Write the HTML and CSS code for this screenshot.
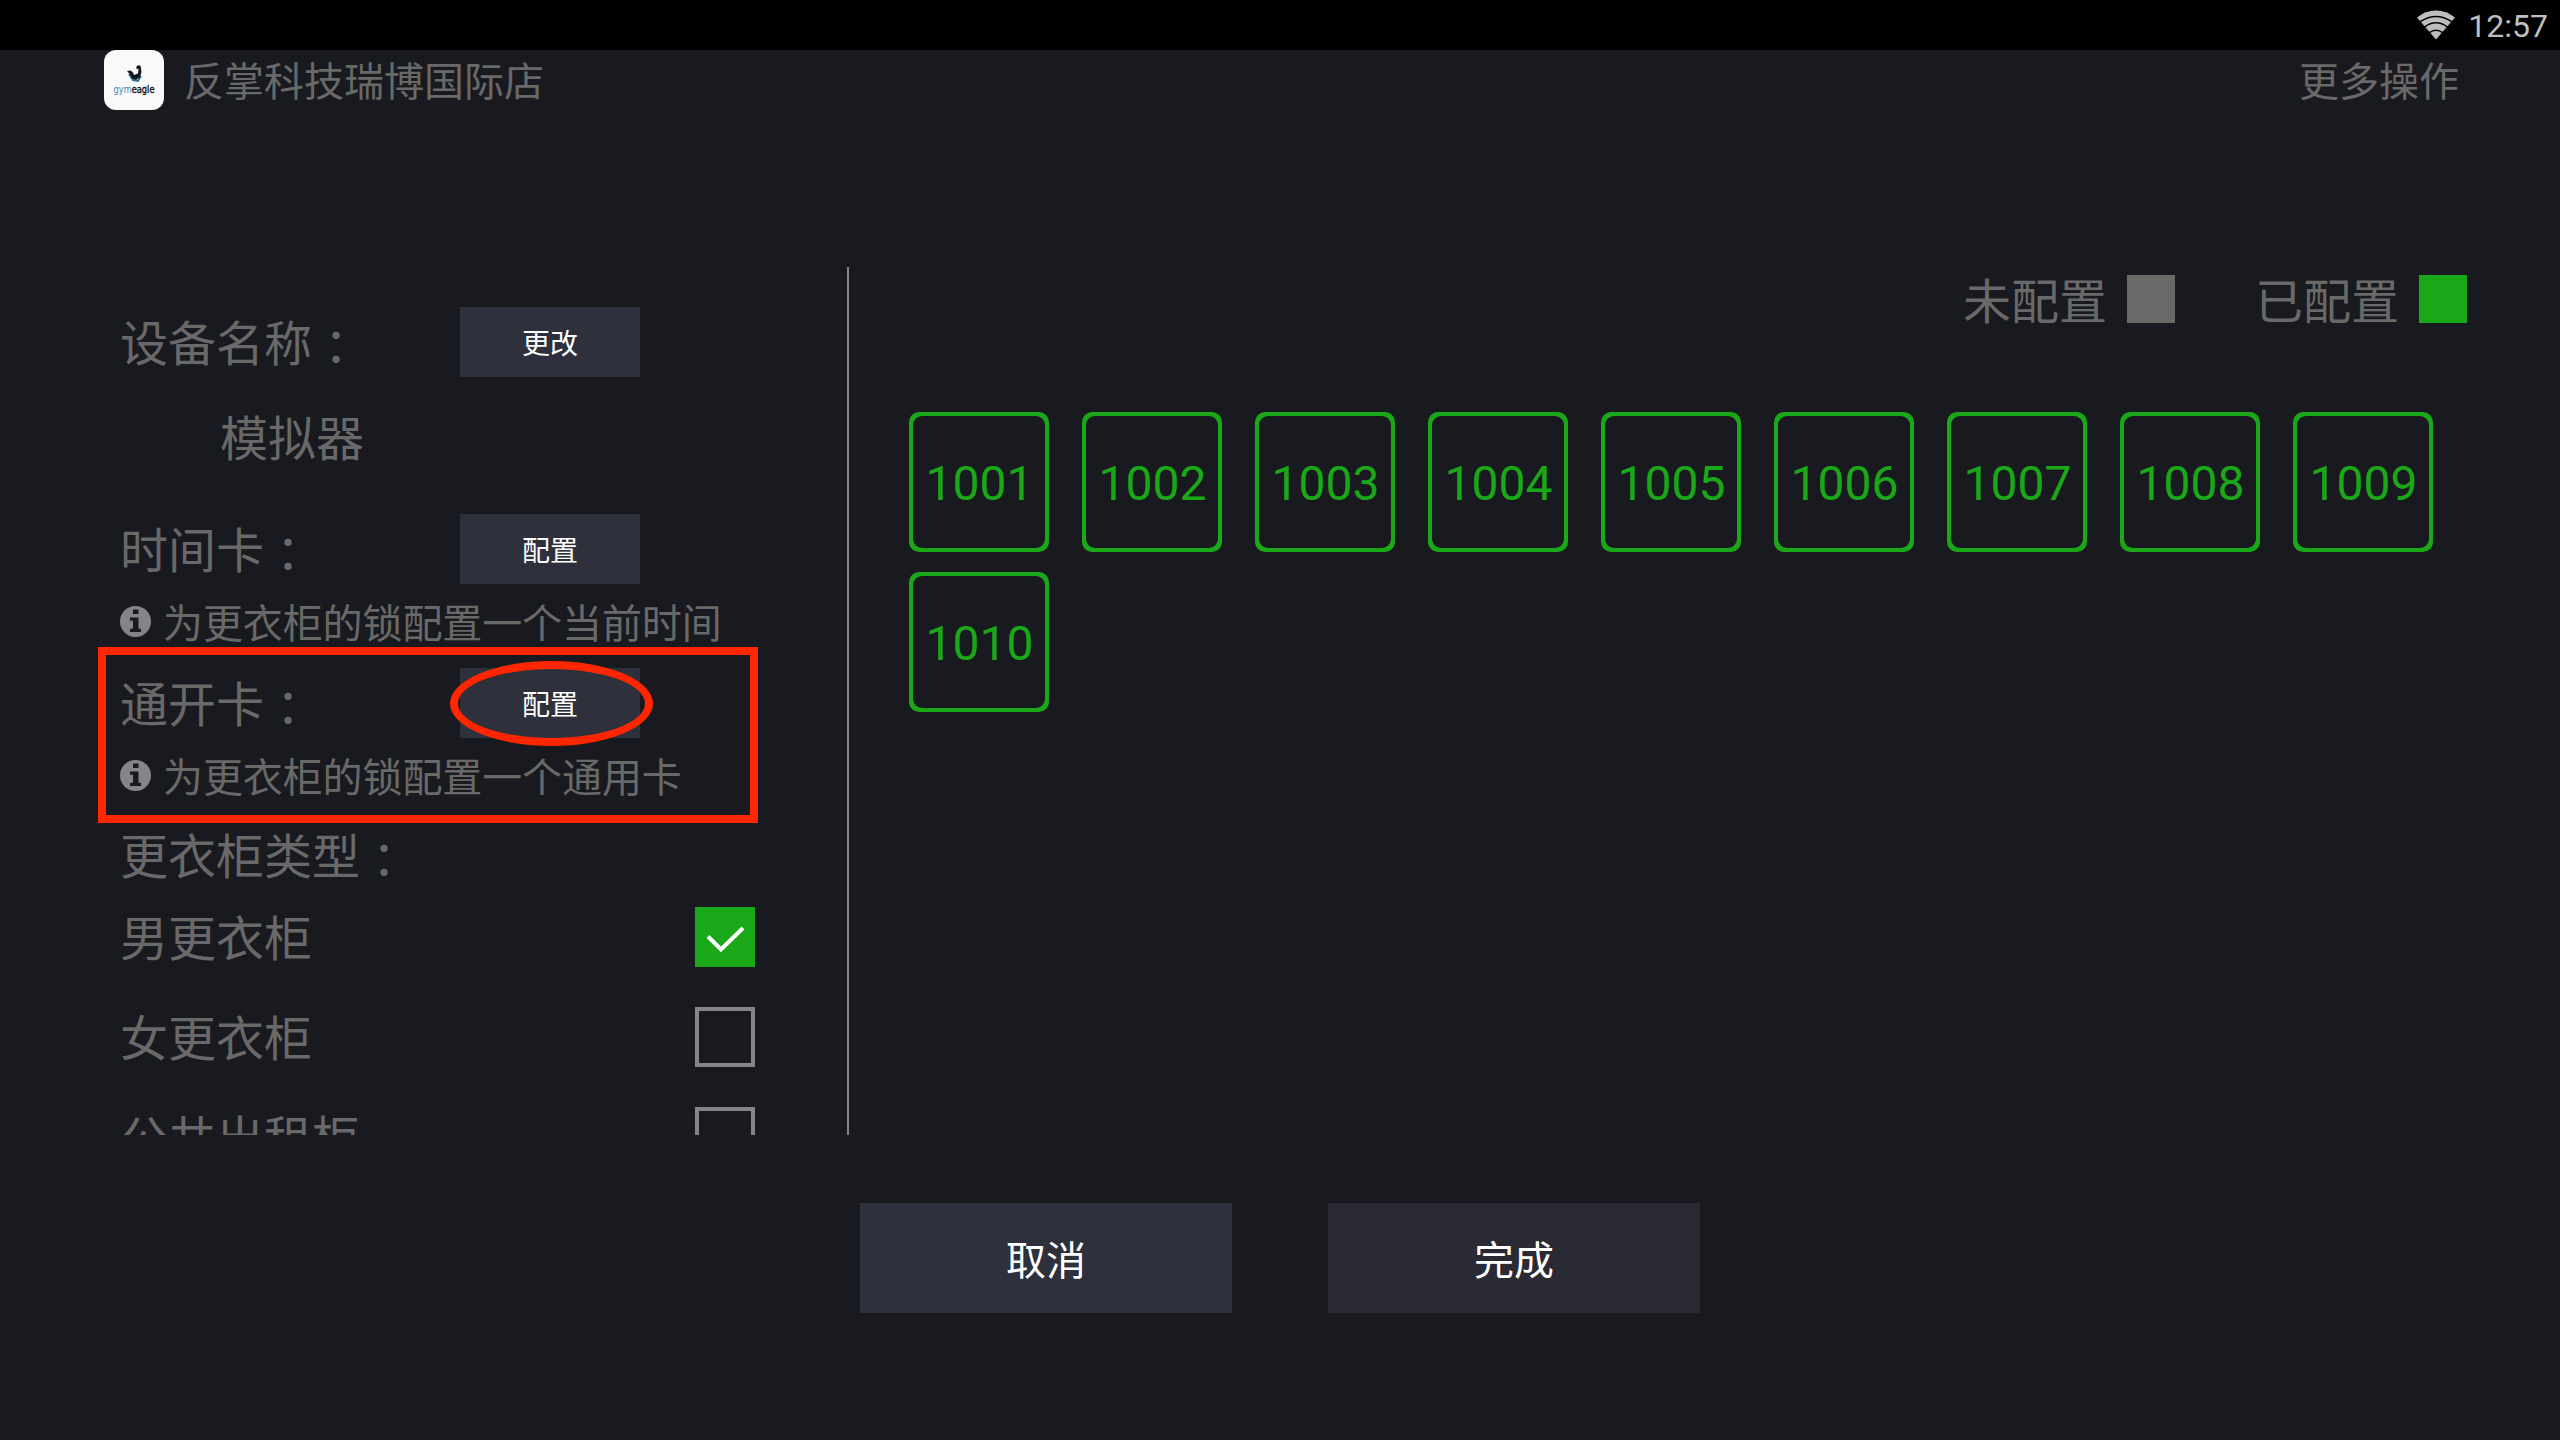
FILE: index.html
```html
<!DOCTYPE html>
<html lang="zh-CN">
<head>
<meta charset="utf-8">
<title>设备配置</title>
<link rel="stylesheet" href="styles.css">
</head>
<body>
<div class="status-bar">
  <svg class="wifi" viewBox="0 0 38 30" width="38" height="30">
    <path class="wifi-fan" d="M19 29.500L0 7.500Q8.500 .5 19 .5T38 7.500Z"/>
    <path class="wifi-gap" d="M3.500 11.500Q19 1.500 34.500 11.500M7.500 17Q19 8.500 30.500 17M12 22.800Q19 17.500 26 22.800"/>
  </svg>
  <span class="clock">12:57</span>
</div>
<header class="header">
  <svg class="logo" viewBox="0 0 60 60" width="60" height="60">
    <rect width="60" height="60" rx="12" fill="#f9f9f9"/>
    <path d="M25 24L29 30L34 31L37 26" fill="none" stroke="#2b6f9c" stroke-width="2"/>
    <path d="M23 21L26.500 20.500L29 22.500L30 25L34 23.500L34.500 19L32 18.500L33 15.500L36.500 15.500L37.500 22L36 27L32 30L28 28.500L26 24.500Z" fill="#15181b"/>
    <text x="9.500" y="43" textLength="41" lengthAdjust="spacingAndGlyphs" class="logo-text"><tspan fill="#3d86b5">gym</tspan><tspan fill="#15181b" stroke="#15181b" stroke-width=".4">eagle</tspan></text>
  </svg>
  <h1 class="title">反掌科技瑞博国际店</h1>
  <span class="more">更多操作</span>
</header>
<main class="content">
  <section class="settings">
    <div class="row name-row"><span class="label">设备名称<i class="colon" lang="zh-TW">：</i></span><button class="small-btn">更改</button></div>
    <div class="device-name">模拟器</div>
    <div class="row"><span class="label">时间卡<i class="colon" lang="zh-TW">：</i></span><button class="small-btn">配置</button></div>
    <div class="hint">
      <svg class="info" viewBox="0 0 31 31" width="31" height="31"><circle cx="15.500" cy="15.500" r="15.500" fill="#858489"/><path d="M13 3.500h5.500V8H13ZM10 11.500h8.500v11.300H21V26H10v-3.200h3V14.700h-3Z" fill="#191a1f"/></svg>
      <span>为更衣柜的锁配置一个当前时间</span>
    </div>
    <div class="marked">
      <div class="row"><span class="label">通开卡<i class="colon" lang="zh-TW">：</i></span><button class="small-btn circled">配置</button></div>
      <div class="hint">
        <svg class="info" viewBox="0 0 31 31" width="31" height="31"><circle cx="15.500" cy="15.500" r="15.500" fill="#858489"/><path d="M13 3.500h5.500V8H13ZM10 11.500h8.500v11.300H21V26H10v-3.200h3V14.700h-3Z" fill="#191a1f"/></svg>
        <span>为更衣柜的锁配置一个通用卡</span>
      </div>
    </div>
    <div class="type-title">更衣柜类型<i class="colon" lang="zh-TW">：</i></div>
    <div class="option"><span>男更衣柜</span><span class="box checked"><svg viewBox="0 0 60 60" width="60" height="60"><path d="M13 29.500L26 42.500L48 21" fill="none" stroke="#fff" stroke-width="4"/></svg></span></div>
    <div class="option"><span>女更衣柜</span><span class="box"></span></div>
    <div class="option"><span>公共出租柜</span><span class="box"></span></div>
  </section>
  <section class="lockers">
    <div class="legend">
      <span class="legend-item"><span class="legend-text">未配置</span><i class="swatch"></i></span>
      <span class="legend-item"><span class="legend-text">已配置</span><i class="swatch green"></i></span>
    </div>
    <div class="grid">
      <div class="tile"><span>1001</span></div>
      <div class="tile"><span>1002</span></div>
      <div class="tile"><span>1003</span></div>
      <div class="tile"><span>1004</span></div>
      <div class="tile"><span>1005</span></div>
      <div class="tile"><span>1006</span></div>
      <div class="tile"><span>1007</span></div>
      <div class="tile"><span>1008</span></div>
      <div class="tile"><span>1009</span></div>
      <div class="tile"><span>1010</span></div>
    </div>
  </section>
</main>
<footer class="actions">
  <button class="action cancel">取消</button>
  <button class="action done">完成</button>
</footer>
</body>
</html>
```
FILE: styles.css
```css
*, *::before, *::after { box-sizing: border-box; }
* { margin: 0; padding: 0; }
body {
  width: 2560px;
  height: 1440px;
  overflow: hidden;
  background: #191a1f;
  color: #696969;
  font-family: Roboto, "Noto Sans CJK SC", sans-serif;
  font-size: 48px;
  line-height: 60px;
}
i { font-style: normal; }
button { border: 0; color: #fff; font-family: "Noto Sans CJK SC", sans-serif; }
svg { display: block; }

.status-bar {
  display: flex;
  justify-content: flex-end;
  height: 50px;
  padding: 10px 12px 0 0;
  background: #000;
}
.wifi { margin-right: 13px; }
.wifi-fan { fill: #bebebe; }
.wifi-gap { fill: none; stroke: #000; stroke-width: 1.5; }
.clock { color: #bebebe; font-size: 32px; line-height: 32px; }

.header { display: flex; height: 60px; padding: 0 101px 0 104px; }
.logo-text { font: 10px "DejaVu Sans", sans-serif; }
.title { margin-left: 20px; font-size: 40px; font-weight: 400; line-height: 65px; }
.more { margin-left: auto; font-size: 40px; line-height: 65px; }

.content { display: flex; height: 868px; margin-top: 157px; }
.settings {
  width: 849px;
  padding: 40px 92px 0 120px;
  border-right: 2px solid #858489;
  overflow: hidden;
}
.row { display: flex; height: 70px; }
.label { width: 340px; line-height: 66px; }
.colon { position: relative; top: 4px; font-family: "Noto Sans CJK TC", sans-serif; }
.small-btn { width: 180px; height: 70px; background: #2e303c; font-size: 28px; line-height: 70px; }
.device-name { height: 137px; padding: 33px 0 0 100px; }
.hint { display: flex; align-items: flex-start; height: 60px; padding-top: 22px; font-size: 40px; }
.hint span { margin-left: 12px; letter-spacing: -0.1px; line-height: 37px; white-space: nowrap; }

.marked {
  width: 660px;
  height: 176px;
  margin: 3px 0 0 -22px;
  padding: 13px 14px;
  border: 8px solid #ff2600;
}
.circled { position: relative; }
.circled::after {
  content: "";
  position: absolute;
  left: -10px;
  top: -7px;
  width: 203px;
  height: 85px;
  border: 8px solid #ff2600;
  border-radius: 50%;
}
.type-title { height: 84px; }
.option { display: flex; justify-content: space-between; height: 60px; margin-bottom: 40px; line-height: 65px; }
.box { width: 60px; height: 60px; border: 4px solid #858489; }
.checked { border: 0; background: #1aa818; }

.lockers { flex: 1; }
.legend { display: flex; justify-content: flex-end; gap: 82px; height: 68px; padding: 8px 93px 0 0; }
.legend-item { display: flex; gap: 20px; }
.legend-text { line-height: 56px; }
.swatch { width: 48px; height: 48px; background: #696969; }
.swatch.green { background: #1aa818; }
.legend-item + .legend-item { margin-left: -2px; }
.grid { display: grid; grid-template-columns: repeat(9, 140px); gap: 20px 33px; padding: 77px 0 0 60px; }
.tile { height: 140px; padding: 4px; border-radius: 10px; background: #1aa818; }
.tile span {
  display: block;
  height: 132px;
  padding-left: 1px;
  border-radius: 9px;
  background: #191a1f;
  color: #1aa818;
  line-height: 136px;
  text-align: center;
}

.actions { display: flex; gap: 96px; padding: 68px 0 0 860px; }
.action { width: 372px; height: 110px; font-size: 40px; line-height: 110px; }
.cancel { background: #2e303c; }
.done { background: #2a2a34; }
```
